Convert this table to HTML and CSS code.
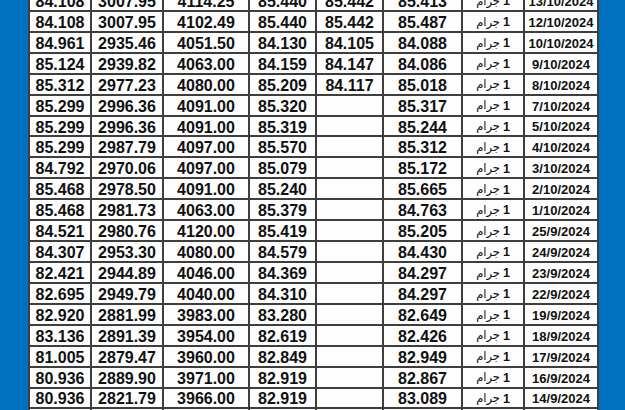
FILE: index.html
```html
<!DOCTYPE html>
<html lang="ar">
<head>
<meta charset="utf-8">
<title>أسعار</title>
<link rel="stylesheet" href="styles.css">
</head>
<body>
<div class="sheet">
<div class="grid">
<div class="c">84.108</div><div class="c">3007.95</div><div class="c">4114.25</div><div class="c">85.440</div><div class="c">85.442</div><div class="c">85.413</div><div class="c u">1 <span class="w">جرام</span></div><div class="c d">13/10/2024</div>
<div class="c">84.108</div><div class="c">3007.95</div><div class="c">4102.49</div><div class="c">85.440</div><div class="c">85.442</div><div class="c">85.487</div><div class="c u">1 <span class="w">جرام</span></div><div class="c d">12/10/2024</div>
<div class="c">84.961</div><div class="c">2935.46</div><div class="c">4051.50</div><div class="c">84.130</div><div class="c">84.105</div><div class="c">84.088</div><div class="c u">1 <span class="w">جرام</span></div><div class="c d">10/10/2024</div>
<div class="c">85.124</div><div class="c">2939.82</div><div class="c">4063.00</div><div class="c">84.159</div><div class="c">84.147</div><div class="c">84.086</div><div class="c u">1 <span class="w">جرام</span></div><div class="c d">9/10/2024</div>
<div class="c">85.312</div><div class="c">2977.23</div><div class="c">4080.00</div><div class="c">85.209</div><div class="c">84.117</div><div class="c">85.018</div><div class="c u">1 <span class="w">جرام</span></div><div class="c d">8/10/2024</div>
<div class="c">85.299</div><div class="c">2996.36</div><div class="c">4091.00</div><div class="c">85.320</div><div class="c"></div><div class="c">85.317</div><div class="c u">1 <span class="w">جرام</span></div><div class="c d">7/10/2024</div>
<div class="c">85.299</div><div class="c">2996.36</div><div class="c">4091.00</div><div class="c">85.319</div><div class="c"></div><div class="c">85.244</div><div class="c u">1 <span class="w">جرام</span></div><div class="c d">5/10/2024</div>
<div class="c">85.299</div><div class="c">2987.79</div><div class="c">4097.00</div><div class="c">85.570</div><div class="c"></div><div class="c">85.312</div><div class="c u">1 <span class="w">جرام</span></div><div class="c d">4/10/2024</div>
<div class="c">84.792</div><div class="c">2970.06</div><div class="c">4097.00</div><div class="c">85.079</div><div class="c"></div><div class="c">85.172</div><div class="c u">1 <span class="w">جرام</span></div><div class="c d">3/10/2024</div>
<div class="c">85.468</div><div class="c">2978.50</div><div class="c">4091.00</div><div class="c">85.240</div><div class="c"></div><div class="c">85.665</div><div class="c u">1 <span class="w">جرام</span></div><div class="c d">2/10/2024</div>
<div class="c">85.468</div><div class="c">2981.73</div><div class="c">4063.00</div><div class="c">85.379</div><div class="c"></div><div class="c">84.763</div><div class="c u">1 <span class="w">جرام</span></div><div class="c d">1/10/2024</div>
<div class="c">84.521</div><div class="c">2980.76</div><div class="c">4120.00</div><div class="c">85.419</div><div class="c"></div><div class="c">85.205</div><div class="c u">1 <span class="w">جرام</span></div><div class="c d">25/9/2024</div>
<div class="c">84.307</div><div class="c">2953.30</div><div class="c">4080.00</div><div class="c">84.579</div><div class="c"></div><div class="c">84.430</div><div class="c u">1 <span class="w">جرام</span></div><div class="c d">24/9/2024</div>
<div class="c">82.421</div><div class="c">2944.89</div><div class="c">4046.00</div><div class="c">84.369</div><div class="c"></div><div class="c">84.297</div><div class="c u">1 <span class="w">جرام</span></div><div class="c d">23/9/2024</div>
<div class="c">82.695</div><div class="c">2949.79</div><div class="c">4040.00</div><div class="c">84.310</div><div class="c"></div><div class="c">84.297</div><div class="c u">1 <span class="w">جرام</span></div><div class="c d">22/9/2024</div>
<div class="c">82.920</div><div class="c">2881.99</div><div class="c">3983.00</div><div class="c">83.280</div><div class="c"></div><div class="c">82.649</div><div class="c u">1 <span class="w">جرام</span></div><div class="c d">19/9/2024</div>
<div class="c">83.136</div><div class="c">2891.39</div><div class="c">3954.00</div><div class="c">82.619</div><div class="c"></div><div class="c">82.426</div><div class="c u">1 <span class="w">جرام</span></div><div class="c d">18/9/2024</div>
<div class="c">81.005</div><div class="c">2879.47</div><div class="c">3960.00</div><div class="c">82.849</div><div class="c"></div><div class="c">82.949</div><div class="c u">1 <span class="w">جرام</span></div><div class="c d">17/9/2024</div>
<div class="c">80.936</div><div class="c">2889.90</div><div class="c">3971.00</div><div class="c">82.919</div><div class="c"></div><div class="c">82.867</div><div class="c u">1 <span class="w">جرام</span></div><div class="c d">16/9/2024</div>
<div class="c">80.936</div><div class="c">2821.79</div><div class="c">3966.00</div><div class="c">82.919</div><div class="c"></div><div class="c">83.089</div><div class="c u">1 <span class="w">جرام</span></div><div class="c d">14/9/2024</div>
<div class="c">80.936</div><div class="c">2821.79</div><div class="c">3966.00</div><div class="c">82.919</div><div class="c"></div><div class="c">83.089</div><div class="c u">1 <span class="w">جرام</span></div><div class="c d">12/9/2024</div>
</div>
</div>
</body>
</html>
```

FILE: styles.css
```css
html, body {
  margin: 0;
  padding: 0;
  width: 625px;
  height: 410px;
  overflow: hidden;
  background: #0070c0;
}

.sheet {
  padding-left: 28px;
  margin-top: -11px;
}

.grid {
  display: grid;
  width: max-content;
  grid-template-columns: 60px 70px 84px 65px 65px 77px 60px 72px;
  grid-auto-rows: 18.93px;
  gap: 2px;
  padding: 2px;
  background: #3e3e3e;
  font-family: "Liberation Sans", Arial, sans-serif;
  font-weight: bold;
  color: #111;
}

.c {
  background: #fdfdfd;
  display: flex;
  align-items: center;
  justify-content: center;
  font-size: 16px;
  line-height: 1;
  padding-top: 3px;
  box-sizing: border-box;
  white-space: nowrap;
  overflow: hidden;
}

.d {
  font-size: 13px;
  padding-top: 2px;
}

.u {
  direction: rtl;
  font-size: 12.5px;
  gap: 3px;
  padding-top: 2px;
}

.w {
  font-family: "DejaVu Sans", sans-serif;
  font-size: 11.5px;
  font-weight: normal;
}
```
